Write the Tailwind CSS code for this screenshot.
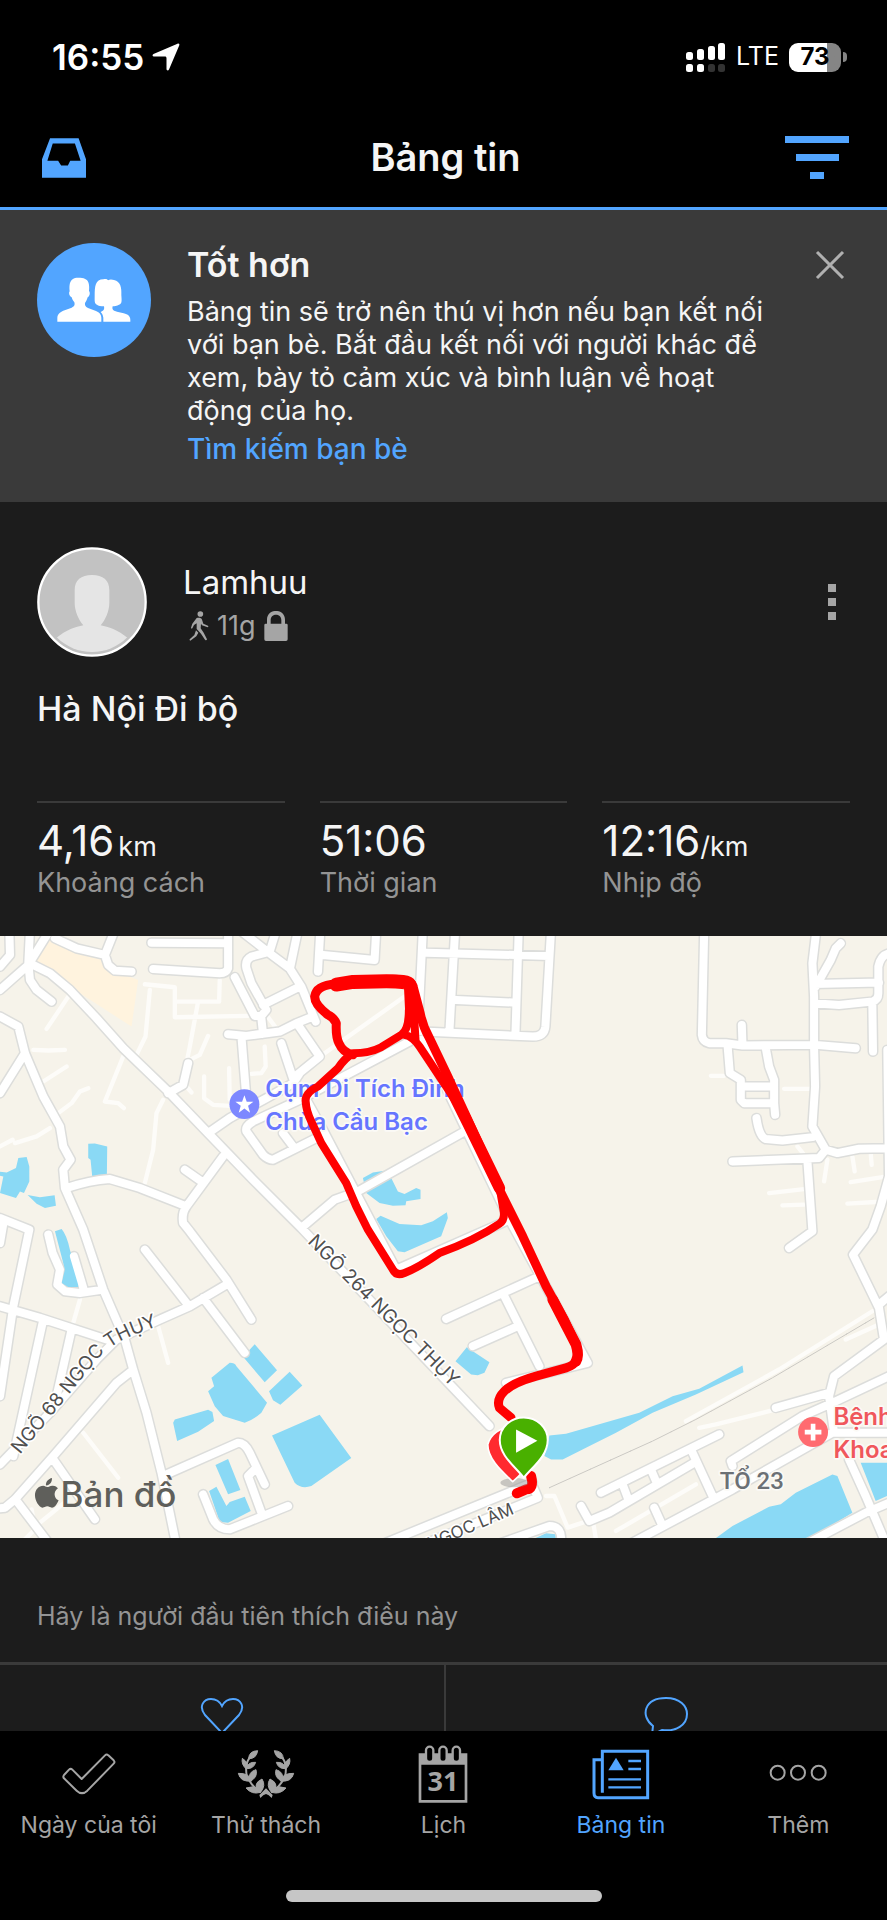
<!DOCTYPE html>
<html lang="vi">
<head>
    <meta charset="UTF-8">
    <meta name="viewport" content="width=device-width, initial-scale=1.0">
    <title>Bảng tin</title>
    <script src="https://cdn.jsdelivr.net/npm/@tailwindcss/browser@4"></script>
</head>
<body class="bg-black font-['Inter','Noto_Sans',sans-serif] text-[#f5f5f5]">
<div class="flex h-screen flex-col overflow-hidden border-r border-white">

    <!-- Status bar -->
    <div class="flex h-28 shrink-0 items-center justify-between pt-0.5 pr-10 pl-13 text-white">
        <div class="flex items-center gap-2">
            <span class="text-[35px] font-semibold">16:55</span>
            <svg class="size-7" viewBox="0 0 28 28" fill="currentColor"><path d="M25.500.8C26.900.2 27.800 1.200 27.200 2.500L17 26.500C16.300 28 14.600 27.700 14.500 26V15.200C14.500 14.200 13.900 13.600 13 13.600H2C.3 13.500 0 11.800 1.500 11.100Z"/></svg>
        </div>
        <div class="flex items-center gap-2.5">
            <svg class="h-[29px] w-10" viewBox="0 0 40 29" fill="currentColor">
                <rect x="0" y="9" width="7" height="8" rx="2.500"/><rect x="11" y="6" width="7" height="11" rx="2.500"/><rect x="22" y="3" width="7" height="14" rx="2.500"/><rect x="32" y="0" width="7" height="17" rx="2.500"/>
                <rect x="0" y="21" width="7" height="8" rx="2.500"/><rect x="11" y="21" width="7" height="8" rx="2.500"/>
                <g fill="#333"><rect x="22" y="21" width="7" height="8" rx="2.500"/><rect x="32" y="21" width="7" height="8" rx="2.500"/></g>
            </svg>
            <span class="text-[25px]">LTE</span>
            <div class="flex items-center gap-0.5">
                <div class="flex h-[29px] w-13 items-center justify-center overflow-hidden rounded-[9px] bg-linear-to-r from-white from-74% to-[#858585] to-74% text-2xl font-bold text-black">73</div>
                <div class="h-2.5 w-1 rounded-r-full bg-[#858585]"></div>
            </div>
        </div>
    </div>

    <!-- Header -->
    <header class="grid h-[98px] shrink-0 grid-cols-3 items-center border-b-3 border-[#52a5ff] pr-9.5 pb-1 pl-10.5">
        <button type="button" aria-label="Hộp thư" class="justify-self-start text-[#52a5ff]">
            <svg class="h-10 w-11" viewBox="0 0 131 117" fill="currentColor" fill-rule="evenodd"><path d="M24 0H109L131 62V117H0V62ZM32 15L16 67H48L57 81H77L84 67H115L98 15Z"/></svg>
        </button>
        <h1 class="text-center text-[38px] font-semibold">Bảng tin</h1>
        <button type="button" aria-label="Bộ lọc" class="justify-self-end text-[#52a5ff]">
            <svg class="h-11 w-16" viewBox="0 0 64 44" fill="currentColor"><path d="M0 0H64V7H0ZM11 18H54V25H11ZM25 36H39V43H25Z"/></svg>
        </button>
    </header>

    <main class="min-h-0 flex-1 overflow-hidden bg-[#1c1c1c]">

        <!-- Suggestion -->
        <section class="flex h-73 items-start bg-[#3a3a3a] pr-[42px] pl-[37px]">
            <svg class="mt-[33px] size-[114px] shrink-0" viewBox="0 0 342 342">
                <circle cx="171" cy="171" r="171" fill="#52a5ff"/>
                <g fill="#fff">
                    <path d="M61 236V224C62 213 71 206 83 202L104 194C113 190 114 185 112 178C107 172 105 166 104 163C98 161 94 150 98 145C96 125 99 113 108 108C113 102 137 104 143 107C155 111 158 125 156 144C161 150 157 161 152 163C150 171 146 177 144 180C143 186 145 191 153 195L177 204C188 208 193 216 193 224V236Z"/>
                    <path d="M199 236V224C198 215 194 210 191 207C199 204 203 200 201 190C192 190 183 189 180 185C172 181 173 173 173 158C173 130 175 109 199 109C206 107 211 109 213 112C218 108 226 109 231 111C251 116 254 134 253 156C254 172 256 183 246 185C240 189 232 189 227 190C224 200 230 204 240 206L260 211C273 214 280 220 280 231V236Z"/>
                </g>
            </svg>
            <div class="mt-[31px] ml-9 flex-1 pr-8">
                <h2 class="text-[34px] leading-12 font-semibold">Tốt hơn</h2>
                <p class="mt-1.5 text-[27px] leading-[33px]">Bảng tin sẽ trở nên thú vị hơn nếu bạn kết nối với bạn bè. Bắt đầu kết nối với người khác để xem, bày tỏ cảm xúc và bình luận về hoạt động của họ.</p>
                <a href="#" class="mt-1 block text-[28px] leading-9 font-medium text-[#52a5ff]">Tìm kiếm bạn bè</a>
            </div>
            <button type="button" aria-label="Đóng" class="mt-10 text-[#b0b0b0]">
                <svg class="size-[30px]" viewBox="0 0 30 30" fill="none" stroke="currentColor" stroke-width="3"><path d="M2 2L28 28M28 2L2 28"/></svg>
            </button>
        </section>

        <!-- Activity -->
        <article>
            <div class="flex items-center px-[37px] pt-[45px]">
                <svg class="size-[110px]" viewBox="0 0 330 330">
                    <clipPath id="face"><circle cx="165" cy="165" r="150"/></clipPath>
                    <circle cx="165" cy="165" r="161" fill="#c2c2c2" stroke="#fff" stroke-width="7"/>
                    <path clip-path="url(#face)" fill="#e5e5e5" d="M165 84C198 84 217 99 217 130V168C217 193 204 220 191 235C215 240 240 247 275 275V330H55V275C90 247 115 240 139 235C126 220 113 193 113 168V130C113 99 132 84 165 84Z"/>
                </svg>
                <div class="ml-9 flex-1">
                    <div class="text-[33px] leading-11">Lamhuu</div>
                    <div class="mt-1 flex items-center gap-2 pl-1.5 text-[#a5a5a5]">
                        <svg class="h-[30px] w-5" viewBox="0 0 58 90" fill="currentColor"><circle cx="33" cy="9" r="8.500"/><path d="M22 21C27 19 37 20 38 26L42 38L56 44Q59 47 55 49L38 43L35 38L34 52L43 65L53 85Q51 90 47 86L35 68L22 54V37L14 42L9 52Q5 54 5 50L9 38ZM20 58L27 65L21 76L3 89Q-1 88 1 85L15 72Z"/></svg>
                        <span class="text-[27px] leading-9">11g</span>
                        <svg class="h-[30px] w-6" viewBox="0 0 70 90" fill="currentColor"><path d="M0 42Q0 38 4 38H8V26C8 -9 62 -9 62 26V38H66Q70 38 70 42V85Q70 90 65 90H5Q0 90 0 85ZM19 38H51V27C51 6 19 6 19 27Z"/></svg>
                    </div>
                </div>
                <button type="button" aria-label="Tùy chọn" class="pr-3.5 text-[#a5a5a5]">
                    <svg class="h-9 w-2" viewBox="0 0 8 36" fill="currentColor"><path d="M0 0H8V8H0ZM0 14H8V22H0ZM0 28H8V36H0Z"/></svg>
                </button>
            </div>
            <h3 class="px-[37px] pt-7 text-[34px] leading-12 font-medium">Hà Nội Đi bộ</h3>

            <dl class="grid grid-cols-3 gap-[35px] px-[37px] pt-17 pb-[35px]">
                <div class="flex flex-col-reverse border-t-2 border-[#3a3a3a] pt-3.5">
                    <dt class="text-[27px] leading-9 text-[#949494]">Khoảng cách</dt>
                    <dd class="flex items-baseline text-[42px] leading-12">4,16<span class="ml-1 text-[27px] leading-none">km</span></dd>
                </div>
                <div class="flex flex-col-reverse border-t-2 border-[#3a3a3a] pt-3.5">
                    <dt class="text-[27px] leading-9 text-[#949494]">Thời gian</dt>
                    <dd class="flex items-baseline text-[42px] leading-12">51:06</dd>
                </div>
                <div class="flex flex-col-reverse border-t-2 border-[#3a3a3a] pt-3.5">
                    <dt class="text-[27px] leading-9 text-[#949494]">Nhịp độ</dt>
                    <dd class="flex items-baseline text-[42px] leading-12">12:16<span class="text-[27px] leading-none">/km</span></dd>
                </div>
            </dl>

            <!-- Route map -->
            <svg class="block w-full bg-[#f6f3ea]" viewBox="0 18 2664 1809" fill="none" stroke-linecap="round" stroke-linejoin="round">
                <defs>
                    <path id="roads" d="M90 100L150 130L210 180L290 265L370 355L500 480L625 610L760 750L905 895L1470 1490M90 0L85 100L90 150L110 180L155 215M0 180L85 105L150 0M0 110L30 75L28 0M165 25L230 55L315 75L345 0M315 75L325 105L345 122L395 125M455 38L685 40M685 0V115Q680 130 660 130L460 117
                        M720 0L810 70L870 115L905 170L948 275M830 0L810 65L755 80Q735 90 740 115L755 160L800 240L785 258H765L705 142M895 0L872 110M790 225L900 170M785 265L790 312M685 313L740 318L840 305L890 280L940 260M725 318L738 480M895 285L960 380L880 445L845 340M625 610L690 565L800 505L880 460L900 430
                        M950 625L820 690Q805 690 790 675L740 605Q735 590 760 575L900 510L1230 335M850 610L880 650M905 895L1005 810L1075 785L1395 605M920 510L970 600L1190 1020L1530 870M1230 330L1270 330L1400 600L1530 870L1765 1300L1520 1360M962 0L955 125M970 75L1125 90L1130 0
                        M1270 0L1255 305M1280 68L1650 78M1367 0L1350 300M1558 0L1548 315M1370 210L1540 218M1655 0L1638 290Q1635 320 1600 320L1270 305
                        M0 260L55 290L75 370L130 500L180 590L190 650L212 690L190 720L195 775L250 900L310 1080L375 1230L400 1320L440 1450L485 1630L530 1850M75 370L0 490M200 775Q270 752 330 748L420 775L560 830L670 680M555 720L605 755M560 830Q545 850 550 880L570 905L680 1050L755 1170M0 1605L150 1450L290 1290L350 1230L480 1170L570 1130L680 1065M435 960L560 1120M610 1105L735 1270M505 490L550 465L565 400
                        M0 865L88 900L40 1130L0 1400M12 870L0 940M0 1130L120 1165L320 1230M130 1170L40 1580M215 1200L170 1400M145 915L158 970L180 1020L172 1065L195 1085L240 1090L310 1080M222 980L250 1075M395 1325L350 1360L160 1580L45 1710L15 1735L0 1737M160 1590L285 1770M50 1715L145 1840
                        M500 1635L715 1540Q735 1540 750 1570L795 1665M765 1620L745 1640L785 1750M610 1695L640 1770Q655 1800 690 1800L790 1760L865 1730M1160 1840L1600 1660M1260 1850L1615 1705L1600 1670M1480 1850L1650 1790Q1690 1790 1685 1840
                        M2115 0L2108 315Q2110 335 2130 340H2180L2230 347L2450 345L2570 355M2228 285L2230 345M2185 345L2192 430L2225 450V510L2235 520H2320M2300 355L2310 410L2325 450V520L2328 555M2230 470H2325M2452 0L2440 100L2445 200V350L2448 470L2440 590L2480 660L2460 685L2200 695M2450 170L2495 90L2510 55L2525 40M2445 162L2640 158M2445 220L2520 225L2620 215Q2638 210 2638 190V110Q2645 75 2670 70M2620 225L2622 365M2272 565Q2280 620 2300 628L2350 632L2440 622M2480 660L2515 670L2580 657L2670 655M2425 695L2440 905L2370 955
                        M2665 360L2670 740L2645 830L2620 900L2562 975L2640 1135L2655 1230L2505 1340L2490 1400L2505 1510M2670 1100L2640 1125M2330 1435L2490 1390M2670 1340L2500 1420L2410 1460L2195 1595L2200 1610M1890 1845L2200 1680L2500 1510H2670M2550 1590L2600 1700L2664 1850M2410 1850L2600 1750L2670 1720M1805 1690L2160 1515M1745 1730L1770 1775L1830 1750L2085 1600M2080 1570L2140 1700M1870 1665L1885 1705M1955 1620L1970 1655M1965 1735L1990 1790M1340 1168L1620 1040M1515 1100L1620 1310M1420 1250L1555 1190"/>
                    <path id="ngo264" d="M922 938L1500 1518"/>
                    <path id="ngo68" d="M60 1576L150 1466L290 1292Q330 1245 400 1217L580 1148"/>
                    <path id="ngoclam" d="M1292 1862L1640 1712"/>
                </defs>

                <path fill="#fff3de" d="M150 28L230 60L320 85L340 122L415 150L395 290L240 190L105 95Z"/>
                <path stroke="#fdfcf9" stroke-width="13" d="M435 163L525 172V262L745 258M525 215H658L660 150M595 215L570 350L560 400M625 318L600 375L570 390M450 180L437 320L410 375M205 200L140 297M370 380L315 515L355 520L372 535M100 360L145 362L195 360M130 455L200 410M175 550L215 520L240 485L265 475M45 640L110 620L150 595M0 650L38 630M490 510L470 550L460 660L435 760M613 440V505L640 525L690 528M688 415L690 510M795 350L798 410L785 430L755 432M975 370L1215 200M800 255L830 295M560 470L575 488M240 1110L220 1180M475 1190L505 1300M250 1510L355 1645M120 1780L200 1715M75 1830L105 1800L95 1740
                    M2135 438H2175M2355 477H2430M2310 790L2415 778M2350 827L2415 825M2475 755L2485 690M2555 757L2650 742M2545 822L2630 817M2560 680L2567 725M2615 670L2618 705M2395 650L2415 675M2060 1475L2340 1320L2620 1145M2100 1495L2150 1485L2330 1440M1640 1700H1665L1705 1795L1780 1770M1850 1805L2090 1665M2540 1230L2640 1185M1780 1770L1790 1830"/>
                <g fill="#8ad9f5">
                    <path d="M265 642L285 641L322 650L321 735L277 740L272 690L265 685ZM55 685L80 682L88 710V755L72 790L60 785L48 805L0 790L10 740L0 738V726L20 728L48 715ZM83 796L120 803L164 797L168 828L135 835L110 822ZM1090 745L1120 728L1155 723L1175 745L1195 785L1215 793L1250 775L1263 780V808L1220 815L1218 827L1180 828L1140 820L1100 790ZM1130 868L1143 858L1200 883L1265 887L1300 875L1342 848L1345 865L1325 920L1215 968L1195 965L1160 920Z"/>
                    <path d="M765 1244L832 1322L795 1358L730 1282ZM690 1300Q705 1300 710 1310L802 1420L785 1450Q760 1472 735 1480L670 1460L645 1430L625 1385L643 1370L635 1345ZM870 1327L908 1368L842 1426L820 1412L808 1385ZM525 1470L625 1441L638 1448L643 1475L595 1507L532 1535L520 1480ZM817 1518L960 1456L1055 1586L935 1670Q905 1680 885 1660ZM647 1607L685 1589L722 1682L685 1695ZM628 1685L650 1672L680 1730L690 1718L735 1702L753 1745L685 1780L660 1778Z"/>
                    <path d="M1368 1295L1402 1253L1470 1298L1455 1330L1435 1337L1415 1335ZM1650 1518L1700 1513L1920 1450L2020 1400L2100 1378L2230 1308L2233 1328L2090 1395L1960 1450L1850 1510L1760 1555L1690 1590H1655L1635 1580ZM2145 1830L2200 1790L2310 1732L2345 1725L2390 1690L2500 1635L2515 1640L2560 1750L2430 1830ZM2585 1600H2664V1700L2630 1715ZM1600 1830L1640 1812L1668 1815L1670 1830Z"/>
                </g>
                <use href="#roads" stroke="#dcdddb" stroke-width="33"/>
                <path fill="#8ad9f5" d="M165 905L185 898Q200 915 210 960L237 1060L235 1072H205L185 1060L195 1020Z"/>
                <use href="#roads" stroke="#fff" stroke-width="24"/>
                <g stroke="#cbc9c4">
                    <path id="rail" stroke-width="3" d="M1650 1675L1960 1535L2090 1470L2320 1345L2625 1165"/>
                    <use href="#rail" stroke-width="11" stroke-dasharray="1 66"/>
                </g>

                <!-- Place names -->
                <g fill="#4f4f4f" stroke="#fff" stroke-width="10" paint-order="stroke" font-size="57">
                    <text><textPath href="#ngo264">NGÕ 264 NGỌC THỤY</textPath></text>
                    <text><textPath href="#ngo68">NGÕ 68 NGỌC THỤY</textPath></text>
                    <text font-size="51"><textPath href="#ngoclam">NGỌC LÂM</textPath></text>
                </g>
                <g stroke="#fbfaf6" stroke-width="10" paint-order="stroke" font-weight="600" font-size="72">
                    <text x="797" y="502" fill="#6675ff">Cụm Di Tích Đình</text>
                    <text x="797" y="600" fill="#6675ff">Chùa Cầu Bạc</text>
                    <text x="2503" y="1487" fill="#f0575c">Bệnh</text>
                    <text x="2503" y="1585" fill="#f0575c">Khoa</text>
                    <text x="2162" y="1680" fill="#6b7075" font-family="Roboto" font-weight="500">TỔ 23</text>
                </g>
                <circle cx="734" cy="523" r="45" fill="#7d88ff"/>
                <path fill="#fff" d="M734 496L741 516L761 516L745 528L751 549L734 536L717 549L723 528L707 516L727 516Z"/>
                <circle cx="2442" cy="1508" r="45" fill="#ff6b70"/>
                <path stroke="#fff" stroke-width="14" stroke-linecap="butt" d="M2417 1508H2467M2442 1483V1533"/>

                <!-- Track -->
                <g stroke="#f00">
                    <path stroke-width="27" d="M1060 375Q1030 368 1018 340Q1008 320 1010 280Q1002 262 985 255Q945 225 945 200Q950 165 1010 162L1060 152L1180 148Q1240 148 1242 175L1262 250Q1270 290 1290 325L1345 440L1410 580L1505 790L1570 920L1640 1070L1695 1170L1730 1245Q1750 1300 1700 1315L1610 1340Q1540 1360 1515 1385Q1490 1410 1500 1435L1535 1465"/>
                    <path stroke-width="42" d="M1010 164L1060 156L1160 154Q1225 154 1228 162"/>
                    <path stroke-width="38" d="M1232 165L1236 250"/>
                    <path stroke-width="24" d="M1228 240Q1228 300 1205 315L1145 352Q1110 370 1060 370Q1035 385 1015 415L955 470Q915 490 918 515Q920 545 935 575L965 640L1040 760L1070 830L1105 900L1180 1020Q1190 1040 1215 1030Q1255 1015 1320 970Q1430 930 1500 882Q1518 870 1512 840L1500 770M1215 315Q1240 320 1260 350L1340 470L1400 560M1238 170L1248 330"/>
                    <path stroke-width="34" d="M1335 440L1405 580L1500 775"/>
                    <path stroke-width="32" d="M1660 1110L1730 1245Q1740 1280 1730 1295"/>
                    <path stroke-width="30" d="M1595 1640Q1605 1680 1580 1680L1552 1692"/>
                </g>
                <ellipse cx="1545" cy="1660" rx="42" ry="14" fill="#8d8d8d" fill-opacity=".45"/>
                <path fill="#ff2a2f" stroke="#fff" stroke-width="5" d="M1540 1657C1510 1628 1465 1590 1465 1545A75 70 0 0 1 1610 1545C1610 1590 1570 1630 1540 1657Z"/>
                <path fill="#49b000" stroke="#fff" stroke-width="6" d="M1573 1645C1548 1612 1501 1580 1501 1532A72 68 0 0 1 1645 1532C1645 1580 1600 1612 1573 1645Z"/>
                <path fill="#fff" d="M1550 1500L1614 1534L1550 1570Z"/>

                <!-- Map credit -->
                <g fill="#5f5f5b">
                    <path d="M156 1646C157 1659 148 1669 138 1668C137 1657 146 1648 156 1646ZM105 1698C105 1681 116 1669 130 1669C135 1669 138 1673 142 1673C146 1673 151 1668 159 1669C166 1669 171 1673 174 1677C159 1687 162 1708 176 1713C172 1723 165 1735 156 1735C151 1735 148 1731 142 1731C136 1731 133 1735 128 1735C116 1734 105 1713 105 1698Z"/>
                    <text x="182" y="1733" font-size="105" font-weight="500">Bản đồ</text>
                </g>
            </svg>

            <p class="px-[37px] pt-14.5 pb-6.5 text-[25px] leading-10 text-[#949494]">Hãy là người đầu tiên thích điều này</p>
            <div class="grid grid-cols-2 border-t-3 border-[#3a3a3a] text-[#52a5ff]">
                <button type="button" aria-label="Thích" class="flex h-24 justify-center pt-8">
                    <svg class="size-11" viewBox="0 0 44 44" fill="none" stroke="currentColor" stroke-width="2"><path d="M22 36L5 18C-2 9 4 2 11 2C17 2 20 5 22 9C24 5 27 2 33 2C40 2 46 9 39 18Z"/></svg>
                </button>
                <button type="button" aria-label="Bình luận" class="flex h-24 justify-center border-l-2 border-[#3a3a3a] pt-8">
                    <svg class="size-11" viewBox="0 0 44 44" fill="none" stroke="currentColor" stroke-width="2"><path d="M9 29C-4 19 0 1 22 1C36 1 43 9 43 17C43 28 32 35 18 33L8 38Z"/></svg>
                </button>
            </div>
        </article>
    </main>

    <!-- Tab bar -->
    <nav class="flex h-[189px] shrink-0 flex-col items-center justify-between bg-black pt-3.5 pb-[18px]">
        <div class="grid w-full grid-cols-5 text-center text-[23px] leading-8 text-[#a5a5a5]">
            <a href="#" class="flex flex-col items-center gap-1.5">
                <svg class="size-[58px]" viewBox="0 0 174 174" fill="none" stroke="currentColor" stroke-width="6" stroke-linejoin="round"><path d="M12 90L27 74Q32 69 37 74L65 102L135 31Q140 26 145 31L161 46Q166 51 161 56L82 137Q66 152 50 137L12 100Q8 95 12 90Z"/></svg>
                Ngày của tôi
            </a>
            <a href="#" class="flex flex-col items-center gap-1.5">
                <svg class="size-[58px]" viewBox="0 0 174 174" fill="currentColor">
                    <g id="branch" stroke="currentColor"><path stroke-width="3" d="M62 17Q36 18 35 41Q58 42 62 17ZM16 40Q12 58 28 72Q39 56 16 40ZM56 52Q32 50 29 71Q50 72 56 52ZM4 85Q10 112 44 108Q38 84 4 85ZM57 74Q32 80 37 110Q64 98 57 74ZM27 129Q45 150 70 142Q70 118 27 129ZM75 102Q42 118 70 143Q88 122 75 102Z"/><path fill="none" stroke-width="6" d="M38 38Q22 60 30 95Q45 125 70 142"/></g>
                    <use href="#branch" transform="matrix(-1 0 0 1 174 0)"/>
                    <path d="M87 130L107 150L104 159Q95 148 87 147Q79 148 70 159L67 150Z"/>
                </svg>
                Thử thách
            </a>
            <a href="#" class="flex flex-col items-center gap-1.5">
                <svg class="size-[58px]" viewBox="0 0 174 174" fill="currentColor">
                    <path d="M14 25H160V173H14ZM22 59V165H152V59Z" fill-rule="evenodd"/>
                    <g stroke="currentColor" stroke-width="7" fill="#000"><rect x="36" y="5" width="22" height="46" rx="11"/><rect x="76" y="5" width="22" height="46" rx="11"/><rect x="116" y="5" width="22" height="46" rx="11"/></g>
                    <text x="87" y="139" font-family="Open Sans" font-size="81" font-weight="700" text-anchor="middle">31</text>
                </svg>
                Lịch
            </a>
            <a href="#" aria-current="page" class="flex flex-col items-center gap-1.5 text-[#52a5ff]">
                <svg class="size-[58px]" viewBox="0 0 174 174" fill="none" stroke="currentColor" stroke-width="9"><path d="M31 143V19H167V158H18Q6 158 6 144V44H31"/><path stroke-width="7" d="M109 48H147M109 72H147M49 103H147M49 127H147"/><path fill="currentColor" stroke="none" d="M72 38L95 76H49Z"/></svg>
                Bảng tin
            </a>
            <a href="#" class="flex flex-col items-center gap-1.5">
                <svg class="size-[58px]" viewBox="0 0 174 174" fill="none" stroke="currentColor" stroke-width="6"><circle cx="26" cy="83" r="21"/><circle cx="87" cy="83" r="21"/><circle cx="149" cy="83" r="21"/></svg>
                Thêm
            </a>
        </div>
        <div class="h-3 w-[316px] rounded-full bg-[#c6c6c6]"></div>
    </nav>
</div>
</body>
</html>
